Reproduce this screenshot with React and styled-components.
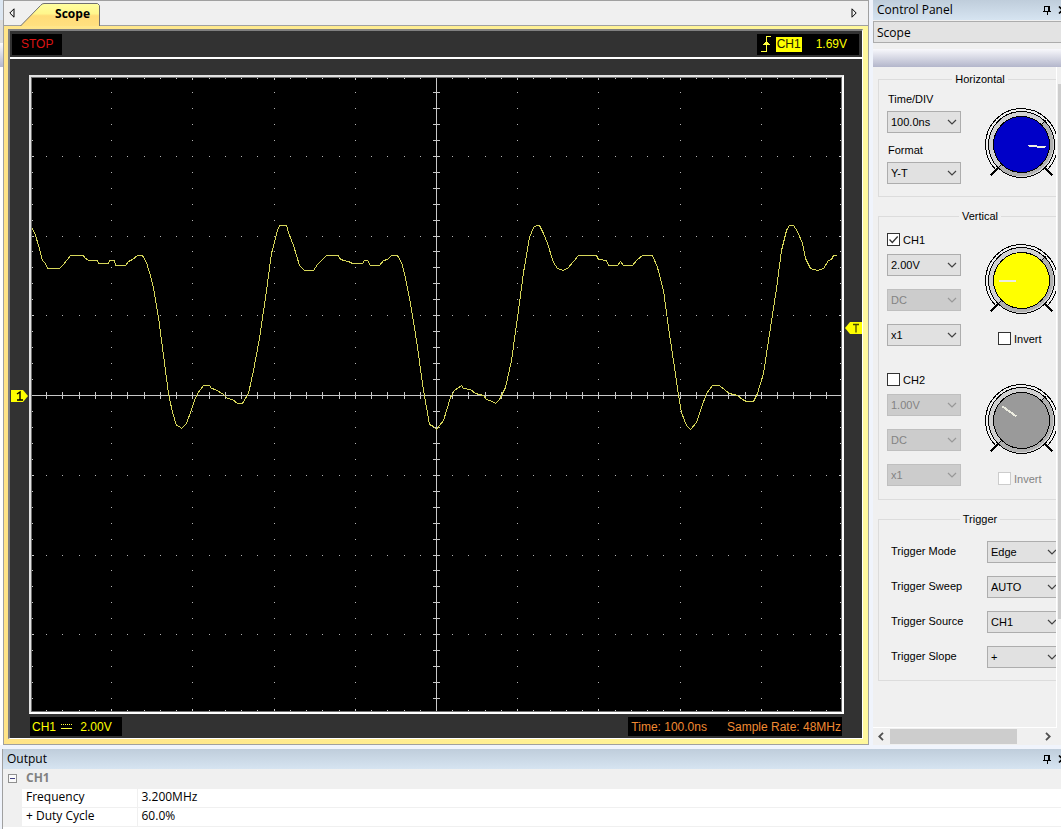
import React, { useState } from 'react'
import styled, { createGlobalStyle, ThemeProvider } from 'styled-components'

const theme = {
  colors: {
    desk: '#f0f4fc',
    face: '#f0f0f0',
    line: '#a0a0a0',
    group: '#dcdcdc',
    frame: '#ffe488',
    dark: '#323232',
    trace: '#d6d65a',
    yellow: '#ffff00',
    orange: '#f08a32',
    red: '#dc1414',
    disabled: '#838383'
  },
  fonts: {
    ui: '"Open Sans", "Noto Sans", sans-serif',
    form: '"Liberation Sans", Arial, sans-serif'
  }
}

const GlobalStyle = createGlobalStyle`
  * { box-sizing: border-box; }
  body {
    margin: 0;
    overflow: hidden;
    background: ${theme.colors.desk};
    color: #000;
    font-family: ${theme.fonts.form};
    font-size: 11px;
  }
  svg { display: block; }
`

const Shell = styled.div`
  display: flex;
  flex-direction: column;
  gap: 4px;
  height: 100vh;
  overflow: hidden;
`

const Main = styled.main`
  display: flex;
  flex: 1;
  min-height: 0;
`

const EdgeStrip = styled.div`
  display: flex;
  flex-direction: column;
  flex: none;
  width: 3px;
  background: linear-gradient(#dce7f3 0 20px, #dcdcdc 20px 43px, #fbfbfd 43px, #b5b8ce 67px, #fff 67px);
`

/* ---------- scope document ---------- */

const Document = styled.section`
  display: flex;
  flex-direction: column;
  flex: 1;
  min-width: 0;
  border: 1px solid ${({ theme }) => theme.colors.line};
  background: linear-gradient(90deg, ${({ theme }) => theme.colors.frame}, #fff89c);
`

const TabStrip = styled.nav`
  display: flex;
  align-items: flex-end;
  justify-content: space-between;
  height: 25px;
  padding: 0 8px 0 2px;
  background: ${({ theme }) => theme.colors.face};
  border-bottom: 1px solid ${({ theme }) => theme.colors.line};
`

const ArrowButton = styled.button`
  display: flex;
  align-items: center;
  justify-content: center;
  width: 12px;
  height: 24px;
  padding: 0;
  border: 0;
  background: none;
`

const TabButton = styled.button`
  position: relative;
  width: 80px;
  height: 24px;
  margin: 0 auto -1px 2px;
  padding: 0 10px 0 0;
  border: 0;
  background: none;
  font: bold 12px/22px ${({ theme }) => theme.fonts.ui};
  text-align: right;
`

const TabShape = styled.svg`
  position: absolute;
  inset: 0;
`

const TabText = styled.span`
  position: relative;
`

const Instrument = styled.div`
  display: flex;
  flex-direction: column;
  flex: 1;
  min-height: 0;
  margin: 3px 5px 5px 4px;
  border: 2px solid #808080;
  border-right: 1px solid #fff;
  border-bottom: 1px solid #fff;
  background: ${({ theme }) => theme.colors.dark};
`

const StatusBar = styled.div`
  display: flex;
  align-items: center;
  justify-content: space-between;
  height: 28px;
  padding: 0 3px 0 2px;
  border-bottom: 2px solid #fff;
`

const Readout = styled.div`
  display: flex;
  align-items: center;
  gap: ${({ $gap }) => $gap || 0}px;
  height: ${({ $small }) => ($small ? 19 : 21)}px;
  padding: ${({ $pad }) => $pad};
  background: #000;
  color: ${({ $tone, theme }) => theme.colors[$tone]};
  font-size: 12px;
  white-space: nowrap;
`

const SourceTag = styled.span`
  margin-left: -9px;
  padding: 0 1px;
  background: ${({ theme }) => theme.colors.yellow};
  color: #222200;
  line-height: 15px;
`

const ScreenArea = styled.div`
  position: relative;
  flex: 1;
  min-height: 0;
  margin: 16px 18px 0 19px;
`

const Screen = styled.div`
  height: 100%;
  border: 2px solid;
  border-color: #e2e2e2 #fff #fff #e2e2e2;
`

const Plot = styled.svg`
  width: 100%;
  height: 100%;
  border: 1px solid #707070;
  background: #000;
`

const Marker = styled.svg`
  position: absolute;
  top: ${({ $top }) => $top}%;
  ${({ $side }) => ($side === 'left' ? 'right: 100%; margin-right: 1px;' : 'left: 100%; margin-left: 1px;')}
  transform: translateY(-50%);
`

const ScreenFooter = styled.div`
  display: flex;
  justify-content: space-between;
  margin: 3px 20px 2px;
`

/* ---------- control panel ---------- */

const ControlPanel = styled.aside`
  display: flex;
  flex-direction: column;
  flex: none;
  width: 188px;
  margin-left: 4px;
  background: ${({ theme }) => theme.colors.face};
  overflow: hidden;
`

const PaneHeader = styled.header`
  display: flex;
  align-items: center;
  justify-content: space-between;
  flex: none;
  height: 20px;
  padding-left: 4px;
  background: linear-gradient(#bfcddb, #d6e4f1);
  font: 12px/20px ${({ theme }) => theme.fonts.ui};
  overflow: hidden;
`

const PaneTitle = styled.h2`
  margin: 0;
  font: inherit;
`

const PaneTools = styled.div`
  display: flex;
  gap: 6px;
  margin-right: -6px;
`

const IconButton = styled.button`
  display: flex;
  align-items: center;
  padding: 0;
  border: 0;
  background: none;
`

const PagePicker = styled.select`
  appearance: none;
  flex: none;
  height: 22px;
  margin: 1px 0 6px;
  padding: 0 3px;
  border: 1px solid #acacac;
  border-width: 1px 0 1px 1px;
  border-radius: 0;
  background: #e3e3e3;
  color: #000;
  font: 12px ${({ theme }) => theme.fonts.ui};
`

const ToolStrip = styled.div`
  flex: none;
  height: 18px;
  background: linear-gradient(#f8f8fc, #b3b6cb);
`

const PanelBody = styled.div`
  display: flex;
  flex: 1;
  min-height: 0;
`

const PanelContent = styled.div`
  flex: 1;
  min-width: 0;
  padding: 4px 0 0 5px;
  overflow: hidden;
`

const VTrack = styled.div`
  flex: none;
  width: 5px;
  padding: 17px 0 108px 1px;
  border-left: 1px solid #fff;
`

const VThumb = styled.div`
  height: 100%;
  background: #cdcdcd;
`

const HTrack = styled.div`
  display: flex;
  align-items: center;
  flex: none;
  height: 18px;
  margin-right: 4px;
  padding: 0 3px 0 2px;
  border-top: 1px solid #fff;
`

const HThumb = styled.div`
  width: 127px;
  height: 15px;
  margin: 0 auto 0 3px;
  background: #cdcdcd;
`

const Group = styled.fieldset`
  display: grid;
  grid-template-columns: ${({ $columns }) => $columns || '74px 1fr'};
  column-gap: 23px;
  row-gap: ${({ $rows }) => $rows || 0}px;
  width: 204px;
  margin: 0 0 11px;
  padding: ${({ $pad }) => $pad};
  border: 1px solid ${({ theme }) => theme.colors.group};
`

const GroupTitle = styled.legend`
  margin: 0 auto;
  padding: 0 3px;
  line-height: 16px;
`

const Stack = styled.div`
  display: flex;
  flex-direction: column;
  gap: ${({ $gap }) => $gap}px;
`

const KnobColumn = styled.div`
  display: flex;
  flex-direction: column;
  justify-content: space-between;
  padding-top: ${({ $top }) => $top}px;
`

const FieldLabel = styled.label`
  display: block;
  padding-left: 1px;
  line-height: 20px;
  white-space: nowrap;
`

const SelectBox = styled.div`
  position: relative;
  width: 74px;
  height: 22px;
  color: ${({ $disabled, theme }) => ($disabled ? theme.colors.disabled : '#000')};
`

const NativeSelect = styled.select`
  appearance: none;
  width: 100%;
  height: 100%;
  padding: 0 18px 0 3px;
  border: 1px solid #adadad;
  border-radius: 0;
  background: #e1e1e1;
  color: inherit;
  font: 11px ${({ theme }) => theme.fonts.form};
  opacity: 1;
  &:disabled {
    border-color: #bfbfbf;
    background: #cccccc;
  }
`

const Chevron = styled.svg`
  position: absolute;
  right: 4px;
  top: 8px;
  pointer-events: none;
  opacity: 0.7;
`

const CheckLabel = styled.label`
  display: flex;
  align-items: center;
  gap: 3px;
  height: 15px;
  margin-left: ${({ $indent }) => $indent || 0}px;
  color: ${({ $disabled, theme }) => ($disabled ? theme.colors.disabled : '#000')};
`

const CheckBox = styled.span`
  display: grid;
  width: 13px;
  height: 13px;
  > * { grid-area: 1 / 1; }
  svg { pointer-events: none; }
`

const NativeCheck = styled.input`
  appearance: none;
  width: 13px;
  height: 13px;
  margin: 0;
  border: 1px solid #333;
  background: #fff;
  &:disabled { border-color: #ccc; }
`

const RowLabel = styled(FieldLabel)`
  padding: 0;
`

/* ---------- output ---------- */

const OutputPane = styled.section`
  flex: none;
  height: 80px;
  margin-left: 2px;
  border-left: 1px solid ${({ theme }) => theme.colors.line};
  background: #fff;
  overflow: hidden;
`

const OutputTable = styled.table`
  width: 100%;
  border-collapse: collapse;
  font: 12px/16px ${({ theme }) => theme.fonts.ui};
  th, td {
    height: 19px;
    padding: 0 4px 2px;
    font-weight: normal;
    text-align: left;
    border-bottom: 1px solid ${({ theme }) => theme.colors.face};
  }
`

const Gutter = styled.td`
  width: 19px;
  background: ${({ theme }) => theme.colors.face};
  && { padding: 0 0 0 5px; }
`

const SectionCell = styled.th`
  background: ${({ theme }) => theme.colors.face};
  color: #808080;
  && {
    padding-bottom: 0;
    font-weight: bold;
  }
`

const NameCell = styled.th`
  width: 115px;
  border-right: 1px solid ${({ theme }) => theme.colors.face};
`

const wave = [
  [32, 228], [35, 235], [38, 245], [42, 260], [45, 263], [47, 268], [59, 268], [63, 264], [70, 255], [83, 255],
  [84, 257], [88, 260], [97, 260], [98, 263], [108, 263], [109, 260], [114, 260], [115, 265], [125, 265], [128, 261],
  [132, 259], [137, 255], [142, 255], [146, 262], [149, 272], [153, 287], [158, 317], [163, 355], [168, 393],
  [172, 412], [176, 425], [179, 426], [181, 428], [183, 426], [186, 423], [190, 412], [194, 400], [197, 393],
  [203, 385], [209, 385], [211, 388], [215, 389], [223, 394], [227, 398], [232, 399], [237, 403], [242, 403],
  [245, 398], [248, 393], [253, 370], [259, 338], [266, 290], [271, 253], [277, 230], [279, 225], [286, 225],
  [288, 232], [293, 245], [299, 265], [304, 270], [313, 270], [317, 264], [326, 255], [338, 255], [339, 258],
  [343, 260], [348, 261], [352, 263], [362, 263], [364, 260], [367, 260], [370, 265], [379, 265], [383, 260],
  [387, 259], [391, 255], [397, 255], [401, 262], [404, 273], [410, 303], [416, 340], [423, 390], [429, 424],
  [433, 426], [436, 429], [439, 425], [443, 420], [450, 397], [454, 390], [461, 385], [463, 388], [470, 389],
  [475, 393], [483, 395], [486, 399], [492, 401], [495, 403], [499, 399], [505, 387], [511, 360], [517, 317],
  [523, 272], [529, 237], [533, 227], [536, 225], [539, 225], [543, 233], [547, 243], [553, 262], [557, 268],
  [563, 270], [568, 267], [578, 255], [596, 255], [598, 259], [606, 260], [608, 265], [617, 265], [620, 261],
  [623, 265], [632, 265], [637, 259], [642, 255], [652, 255], [657, 267], [663, 290], [668, 327], [674, 367],
  [678, 395], [681, 412], [686, 425], [690, 429], [696, 422], [701, 407], [706, 393], [712, 385], [719, 385],
  [725, 390], [729, 393], [737, 395], [742, 399], [746, 401], [753, 401], [757, 393], [763, 373], [770, 327],
  [776, 288], [781, 250], [786, 230], [789, 225], [793, 225], [797, 231], [802, 243], [805, 258], [810, 268],
  [817, 270], [823, 268], [828, 260], [831, 259], [833, 255], [836, 255]
]

const CX = 436
const CY = 395
const gridX = i => Math.round(CX + i * 16.24)
const gridY = j => Math.round(CY + j * 15.95)

const range = n => Array.from({ length: n * 2 + 1 }, (_, i) => i - n)

const Graticule = () => {
  const dots = []
  const ticks = []
  range(24).forEach(i => {
    const x = gridX(i)
    ticks.push(`M${x} ${CY - 3}h1v7h-1z`)
    ticks.push(`M${x} 78h1v${i % 5 === 0 ? 2 : 1}h-1z`)
    ticks.push(`M${x} 711h1v-${i % 5 === 0 ? 2 : 1}h-1z`)
    range(3).forEach(r => dots.push(`M${x} ${gridY(r * 5)}h1v1h-1z`))
  })
  range(19).forEach(j => {
    const y = gridY(j)
    ticks.push(`M${CX - 3} ${y}h7v1h-7z`)
    ticks.push(`M32 ${y}h${j % 5 === 0 ? 2 : 1}v1h-2z`)
    ticks.push(`M841 ${y}h-${j % 5 === 0 ? 2 : 1}v1h1z`)
    range(4).forEach(c => dots.push(`M${gridX(c * 5)} ${y}h1v1h-1z`))
  })
  return (
    <g shapeRendering="crispEdges">
      <path d={dots.join('')} fill="#b4b4b4" />
      <path d={ticks.join('')} fill="#c8c8c8" />
      <path d={`M32 ${CY}h809v1h-809zM${CX} 78h1v633h-1z`} fill="#c8c8c8" />
    </g>
  )
}

const ChevronDown = () => (
  <Chevron width="10" height="7" viewBox="0 0 10 7" fill="none" stroke="currentColor" strokeWidth="1.2">
    <path d="M1 1l4 4 4-4" />
  </Chevron>
)

const Select = ({ id, value, label, disabled }) => (
  <SelectBox $disabled={disabled}>
    <NativeSelect id={id} aria-label={label} disabled={disabled} defaultValue={value}>
      <option>{value}</option>
    </NativeSelect>
    <ChevronDown />
  </SelectBox>
)

const Check = ({ label, initial = false, disabled, indent }) => {
  const [on, setOn] = useState(initial)
  return (
    <CheckLabel $disabled={disabled} $indent={indent}>
      <CheckBox>
        <NativeCheck type="checkbox" checked={on} disabled={disabled} onChange={() => setOn(!on)} />
        {on && (
          <svg width="13" height="13" viewBox="0 0 13 13" fill="none" stroke="#333" strokeWidth="1.3">
            <path d="M2.5 6.5l2.8 3 5.4-6" />
          </svg>
        )}
      </CheckBox>
      {label}
    </CheckLabel>
  )
}

const Knob = ({ color, hand, handColor = '#ecece0' }) => (
  <svg width="74" height="74" viewBox="-37.5 -37.5 74 74" fill="none" stroke="#000" shapeRendering="crispEdges">
    <path d="M-25.5 25.5A36 36 0 1 1 25.5 25.5" />
    <circle r="33" fill="#d2d2d2" />
    <path d="M23.3-23.3A33 33 0 0 1-23.3 23.3Z" fill="#b0b0b0" stroke="none" />
    <circle r="33" />
    <path d="M19-19l5-5M-19 19l-5 5" />
    <circle r="28" fill={color} />
    <path d="M-24 24l-7 7M24 24l7 7" strokeWidth="1.6" />
    <path d={hand} stroke={handColor} strokeWidth="2" />
  </svg>
)

const PaneIcons = () => (
  <PaneTools>
    <IconButton aria-label="Auto hide">
      <svg width="9" height="10" viewBox="0 0 9 10" shapeRendering="crispEdges">
        <path d="M1 1h6v5h1v1H5v3H4V7H0V6h1zM2 2v4h3V2z" fillRule="evenodd" />
      </svg>
    </IconButton>
    <IconButton aria-label="Close">
      <svg width="9" height="10" viewBox="0 0 9 10" stroke="#000" strokeWidth="1.6">
        <path d="M1 1.5l7 7M8 1.5l-7 7" />
      </svg>
    </IconButton>
  </PaneTools>
)

const channels = [
  { name: 'CH1', on: true, volts: '2.00V', color: '#ffff00', hand: 'M-23 0h17', off: [false, true, false] },
  { name: 'CH2', on: false, volts: '1.00V', color: '#9a9a9a', hand: 'M-19-14l14 10', off: [true, true, true] }
]

const triggers = [
  ['Trigger Mode', 'Edge'],
  ['Trigger Sweep', 'AUTO'],
  ['Trigger Source', 'CH1'],
  ['Trigger Slope', '+']
]

const measurements = [
  ['Frequency', '3.200MHz'],
  ['+ Duty Cycle', '60.0%']
]

const ScopeDocument = () => (
  <Document>
    <TabStrip>
      <ArrowButton aria-label="Previous tab">
        <svg width="6" height="10" viewBox="0 0 6 10" fill="none" stroke="#000"><path d="M5 .8v8.4L.8 5z" /></svg>
      </ArrowButton>
      <TabButton>
        <TabShape width="80" height="24" viewBox="0 0 80 24">
          <defs>
            <linearGradient id="tab" x1="0" y1="0" x2="0" y2="1">
              <stop offset="0" stopColor="#ffffa0" />
              <stop offset=".45" stopColor="#fff68c" />
              <stop offset=".55" stopColor="#ffdc78" />
              <stop offset="1" stopColor="#ffe080" />
            </linearGradient>
          </defs>
          <path d="M.5 24L20.5 3.5Q22 1.500 24 1.500H77.500L79.500 3.500V24" fill="url(#tab)" stroke="#707070" />
        </TabShape>
        <TabText>Scope</TabText>
      </TabButton>
      <ArrowButton aria-label="Next tab">
        <svg width="6" height="10" viewBox="0 0 6 10" fill="none" stroke="#000"><path d="M1 .8v8.4L5.200 5z" /></svg>
      </ArrowButton>
    </TabStrip>
    <Instrument>
      <StatusBar>
        <Readout $tone="red" $pad="0 9px">STOP</Readout>
        <Readout $tone="yellow" $gap={14} $pad="0 12px 0 4px">
          <svg width="10" height="18" viewBox="0 0 10 18" fill="none" stroke="#ffff3c" shapeRendering="crispEdges">
            <path d="M0 16.500h5.500v-15H10" />
            <path d="M5.500 6L2 10h7z" fill="#ffff3c" stroke="none" />
          </svg>
          <SourceTag>CH1</SourceTag>
          <span>1.69V</span>
        </Readout>
      </StatusBar>
      <ScreenArea>
        <Screen>
          <Plot viewBox="32 78 809 633" preserveAspectRatio="none">
            <Graticule />
            <polyline
              points={wave.map(([x, y]) => `${x + 0.5},${y + 0.5}`).join(' ')}
              fill="none"
              stroke={theme.colors.trace}
              shapeRendering="crispEdges"
            />
          </Plot>
        </Screen>
        <Marker $side="left" $top={50.2} width="17" height="12" viewBox="0 0 17 12">
          <path d="M0 0h12l5 6-5 6H0z" fill="#ffff00" />
          <path d="M6 4l3-2v8M6 10h6" fill="none" stroke="#000" strokeWidth="1.4" />
        </Marker>
        <Marker $side="right" $top={39.6} width="17" height="12" viewBox="0 0 17 12">
          <path d="M17 0H5L0 6l5 6h12z" fill="#ffff00" />
          <path d="M8 2.500h6M11 2.500v8" fill="none" stroke="#4a4a00" strokeWidth="1.3" />
        </Marker>
      </ScreenArea>
      <ScreenFooter>
        <Readout $small $tone="yellow" $gap={5} $pad="0 10px 0 2px">
          <span>CH1</span>
          <svg width="11" height="6" viewBox="0 0 11 6" stroke="#ffff3c" shapeRendering="crispEdges">
            <path d="M0 .5h11" strokeDasharray="1 1" />
            <path d="M0 4.500h11" />
          </svg>
          <span>&nbsp;2.00V</span>
        </Readout>
        <Readout $small $tone="orange" $gap={20} $pad="0 1px 0 3px">
          <span>Time: 100.0ns</span>
          <span>Sample Rate: 48MHz</span>
        </Readout>
      </ScreenFooter>
    </Instrument>
  </Document>
)

const Controls = () => (
  <ControlPanel>
    <PaneHeader>
      <PaneTitle>Control Panel</PaneTitle>
      <PaneIcons />
    </PaneHeader>
    <PagePicker aria-label="Instrument" defaultValue="Scope">
      <option>Scope</option>
    </PagePicker>
    <ToolStrip />
    <PanelBody>
      <PanelContent>
        <Group $pad="2px 8px 12px">
          <GroupTitle>Horizontal</GroupTitle>
          <Stack $gap={7}>
            <Stack $gap={2}>
              <FieldLabel htmlFor="time">Time/DIV</FieldLabel>
              <Select id="time" value="100.0ns" />
            </Stack>
            <Stack $gap={2}>
              <FieldLabel htmlFor="format">Format</FieldLabel>
              <Select id="format" value="Y-T" />
            </Stack>
          </Stack>
          <KnobColumn $top={18}>
            <Knob color="#0000c8" hand="M7 1l17 2" />
          </KnobColumn>
        </Group>
        <Group $pad="8px 8px 13px" $rows={26}>
          <GroupTitle>Vertical</GroupTitle>
          {channels.map(ch => (
            <React.Fragment key={ch.name}>
              <Stack $gap={7}>
                <Check label={ch.name} initial={ch.on} />
                <Stack $gap={13}>
                  <Select label={`${ch.name} volts`} value={ch.volts} disabled={ch.off[0]} />
                  <Select label={`${ch.name} coupling`} value="DC" disabled={ch.off[1]} />
                  <Select label={`${ch.name} probe`} value="x1" disabled={ch.off[2]} />
                </Stack>
              </Stack>
              <KnobColumn $top={11}>
                <Knob color={ch.color} hand={ch.hand} />
                <Check label="Invert" disabled={!ch.on} indent={14} />
              </KnobColumn>
            </React.Fragment>
          ))}
        </Group>
        <Group $columns="73px 74px" $rows={13} $pad="14px 12px 12px">
          <GroupTitle>Trigger</GroupTitle>
          {triggers.map(([label, value]) => (
            <React.Fragment key={label}>
              <RowLabel htmlFor={label}>{label}</RowLabel>
              <Select id={label} value={value} />
            </React.Fragment>
          ))}
        </Group>
      </PanelContent>
      <VTrack>
        <VThumb />
      </VTrack>
    </PanelBody>
    <HTrack>
      <ArrowButton aria-label="Scroll left">
        <svg width="6" height="9" viewBox="0 0 6 9" fill="none" stroke="#505050" strokeWidth="1.8"><path d="M5 .8L1.300 4.500 5 8.200" /></svg>
      </ArrowButton>
      <HThumb />
      <ArrowButton aria-label="Scroll right">
        <svg width="6" height="9" viewBox="0 0 6 9" fill="none" stroke="#505050" strokeWidth="1.8"><path d="M1 .8l3.700 3.700L1 8.200" /></svg>
      </ArrowButton>
    </HTrack>
  </ControlPanel>
)

const Output = () => (
  <OutputPane>
    <PaneHeader>
      <PaneTitle>Output</PaneTitle>
      <PaneIcons />
    </PaneHeader>
    <OutputTable>
      <tbody>
        <tr>
          <Gutter>
            <IconButton aria-label="Collapse">
              <svg width="9" height="9" viewBox="0 0 9 9" shapeRendering="crispEdges">
                <rect x=".5" y=".5" width="8" height="8" fill="#fafafa" stroke="#909090" />
                <path d="M2 4.500h5" stroke="#404080" />
              </svg>
            </IconButton>
          </Gutter>
          <SectionCell colSpan={2}>CH1</SectionCell>
        </tr>
        {measurements.map(([name, value]) => (
          <tr key={name}>
            <Gutter />
            <NameCell>{name}</NameCell>
            <td>{value}</td>
          </tr>
        ))}
      </tbody>
    </OutputTable>
  </OutputPane>
)

const App = () => {
  return (
    <ThemeProvider theme={theme}>
      <GlobalStyle />
      <Shell>
        <Main>
          <EdgeStrip />
          <ScopeDocument />
          <Controls />
        </Main>
        <Output />
      </Shell>
    </ThemeProvider>
  )
}

export default App
